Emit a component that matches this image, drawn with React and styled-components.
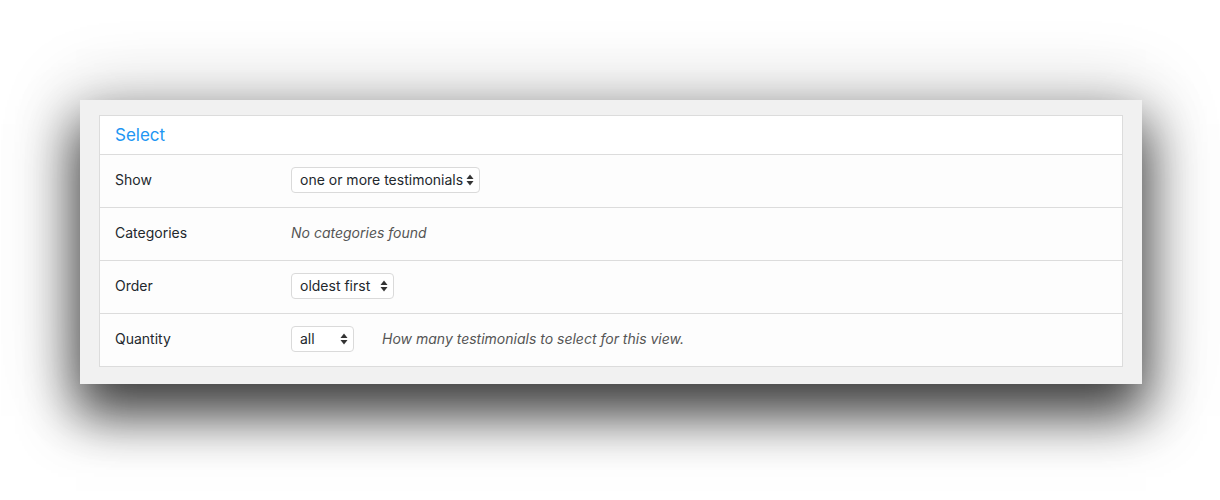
import styled, { createGlobalStyle } from "styled-components";

const GlobalStyle = createGlobalStyle`
  html, body {
    margin: 0;
    padding: 0;
    background: #ffffff;
  }
  body {
    font-family: Inter, "Noto Sans", "Liberation Sans", sans-serif;
    color: #23282d;
  }
`;

const rows = [
  { label: "Show", select: "one or more testimonials", width: 189 },
  { label: "Categories", note: "No categories found" },
  { label: "Order", select: "oldest first", width: 103 },
  {
    label: "Quantity",
    select: "all",
    width: 63,
    help: "How many testimonials to select for this view.",
  },
];

function Arrows() {
  return (
    <svg width="8" height="12" viewBox="0 0 8 12">
      <path d="M4 0.5 L7.5 5 L0.5 5 Z" fill="#333" />
      <path d="M4 11.5 L7.5 7 L0.5 7 Z" fill="#333" />
    </svg>
  );
}

function App() {
  return (
    <>
      <GlobalStyle />
      <Page>
        <Window>
          <Table>
            <Header>Select</Header>
            {rows.map((row) => (
              <Row key={row.label}>
                <Label>{row.label}</Label>
                <Field>
                  {row.select && (
                    <SelectBox $width={row.width}>
                      <span>{row.select}</span>
                      <Arrows />
                    </SelectBox>
                  )}
                  {row.note && <Note>{row.note}</Note>}
                  {row.help && <Help>{row.help}</Help>}
                </Field>
              </Row>
            ))}
          </Table>
        </Window>
      </Page>
    </>
  );
}

const Page = styled.div`
  padding: 100px 0 0 80px;
  height: 500px;
  box-sizing: border-box;
  overflow: hidden;
`;

const Window = styled.div`
  width: 1062px;
  height: 284px;
  box-sizing: border-box;
  background: #f1f1f1;
  padding: 15px 19px 17px 19px;
  box-shadow: 0 28px 50px 4px rgba(0, 0, 0, 0.72),
    0 0 70px 6px rgba(0, 0, 0, 0.18);
`;

const Table = styled.div`
  border: 1px solid #dcdcdc;
  background: #fdfdfd;
`;

const Header = styled.div`
  height: 38px;
  display: flex;
  align-items: center;
  padding: 0 15px;
  background: #ffffff;
  color: #2196f3;
  font-size: 17px;
  font-weight: 400;
`;

const Row = styled.div`
  height: 53px;
  box-sizing: border-box;
  display: grid;
  grid-template-columns: 176px 1fr;
  align-items: center;
  border-top: 1px solid #dcdcdc;
  padding: 0 0 3px 15px;
`;

const Label = styled.div`
  font-size: 14px;
  color: #23282d;
`;

const Field = styled.div`
  display: flex;
  align-items: center;
  gap: 28px;
`;

const SelectBox = styled.div`
  width: ${(p) => p.$width}px;
  height: 26px;
  box-sizing: border-box;
  display: flex;
  align-items: center;
  justify-content: space-between;
  padding: 0 5px 0 8px;
  background: #fff;
  border: 1px solid #dadada;
  border-radius: 4px;
  font-size: 14px;
  color: #23282d;
`;

const Note = styled.div`
  font-size: 14px;
  font-style: italic;
  color: #555;
`;

const Help = styled(Note)``;

export default App;
